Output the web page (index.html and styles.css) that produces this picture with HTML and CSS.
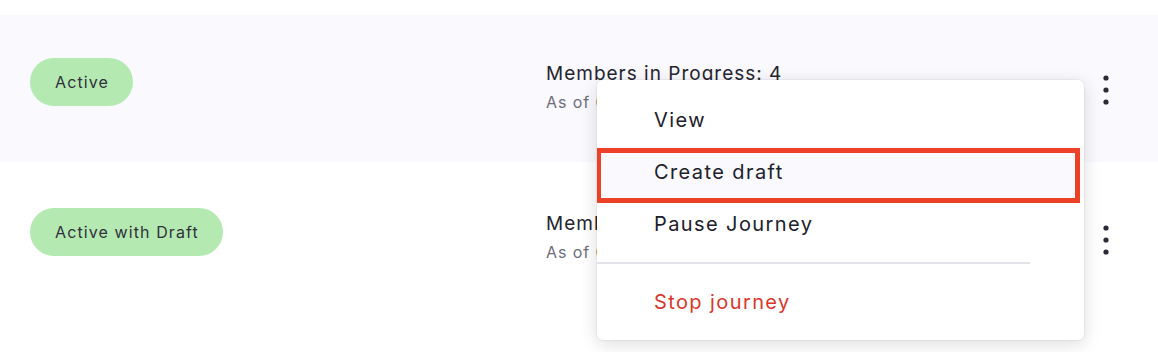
FILE: index.html
```html
<!DOCTYPE html>
<html lang="en">
<head>
<meta charset="utf-8">
<title>Journeys</title>
<link rel="stylesheet" href="styles.css">
</head>
<body>
<div class="list">
  <div class="row row-hover">
    <div class="status"><span class="badge">Active</span></div>
    <div class="info">
      <div class="members">Members in Progress: 4</div>
      <div class="asof">As of 09/14/2023, 10:32 AM</div>
    </div>
    <button class="kebab" aria-label="More actions">
      <svg width="8" height="30" viewBox="0 0 8 30"><circle cx="4" cy="3" r="2.6"/><circle cx="4" cy="15" r="2.6"/><circle cx="4" cy="27" r="2.6"/></svg>
    </button>
  </div>
  <div class="row">
    <div class="status"><span class="badge">Active with Draft</span></div>
    <div class="info">
      <div class="members">Members in Progress: 12</div>
      <div class="asof">As of 09/14/2023, 10:32 AM</div>
    </div>
    <button class="kebab" aria-label="More actions">
      <svg width="8" height="30" viewBox="0 0 8 30"><circle cx="4" cy="3" r="2.6"/><circle cx="4" cy="15" r="2.6"/><circle cx="4" cy="27" r="2.6"/></svg>
    </button>
  </div>
</div>

<div class="menu" role="menu">
  <div class="item">View</div>
  <div class="item item-hover">Create draft</div>
  <div class="item">Pause Journey</div>
  <div class="divider"></div>
  <div class="item danger">Stop journey</div>
</div>
<div class="highlight"></div>
</body>
</html>
```

FILE: styles.css
```css
* { box-sizing: border-box; }
html, body { margin: 0; padding: 0; background: #ffffff; }
body {
  font-family: Inter, "Noto Sans", "Liberation Sans", sans-serif;
  color: #2a2a35;
  width: 1158px;
  height: 352px;
  overflow: hidden;
  position: relative;
}
.list {
  padding-top: 15px;
  display: flex;
  flex-direction: column;
  gap: 3px;
}
.row {
  height: 147px;
  display: grid;
  grid-template-columns: 516px 1fr auto;
  align-items: start;
  padding-left: 30px;
  padding-right: 40px;
}
.row-hover { background: #f9f9fe; }
.status { padding-top: 43px; }
.badge {
  display: inline-flex;
  align-items: center;
  height: 48px;
  padding: 0 24px 0 25px;
  border-radius: 24px;
  background: #b4eab2;
  color: #30303a;
  font-size: 16px;
  letter-spacing: 1.1px;
}
.info { padding-top: 46px; }
.members {
  font-size: 19px;
  line-height: 25px;
  letter-spacing: 1px;
  color: #25252f;
}
.asof {
  margin-top: 5px;
  font-size: 16px;
  line-height: 22px;
  letter-spacing: 0.9px;
  color: #6e6e7a;
}
.kebab {
  margin-top: 59px;
  width: 24px;
  height: 32px;
  padding: 0;
  border: 0;
  background: transparent;
  display: flex;
  justify-content: center;
  align-items: center;
}
.kebab svg { fill: #2b2b36; display: block; }
.menu {
  position: absolute;
  left: 597px;
  top: 80px;
  width: 487px;
  height: 260px;
  background: #ffffff;
  border-radius: 6px;
  box-shadow: 0 0 0 1px rgba(0,0,0,0.04), 0 4px 18px rgba(0,0,0,0.14);
  padding: 14px 0 13px;
}
.item {
  height: 52px;
  display: flex;
  align-items: center;
  padding-left: 57px;
  font-size: 20px;
  letter-spacing: 1.4px;
  color: #20202a;
}
.item-hover { background: #f9f9fe; }
.divider {
  width: 433px;
  height: 2px;
  background: #e2e2ea;
  margin: 12px 0 12px;
}
.danger { color: #d8382c; }
.highlight {
  position: absolute;
  left: 597px;
  top: 148px;
  width: 483px;
  height: 55px;
  border: 5px solid #ec4027;
  border-left-width: 4px;
  pointer-events: none;
}
```
